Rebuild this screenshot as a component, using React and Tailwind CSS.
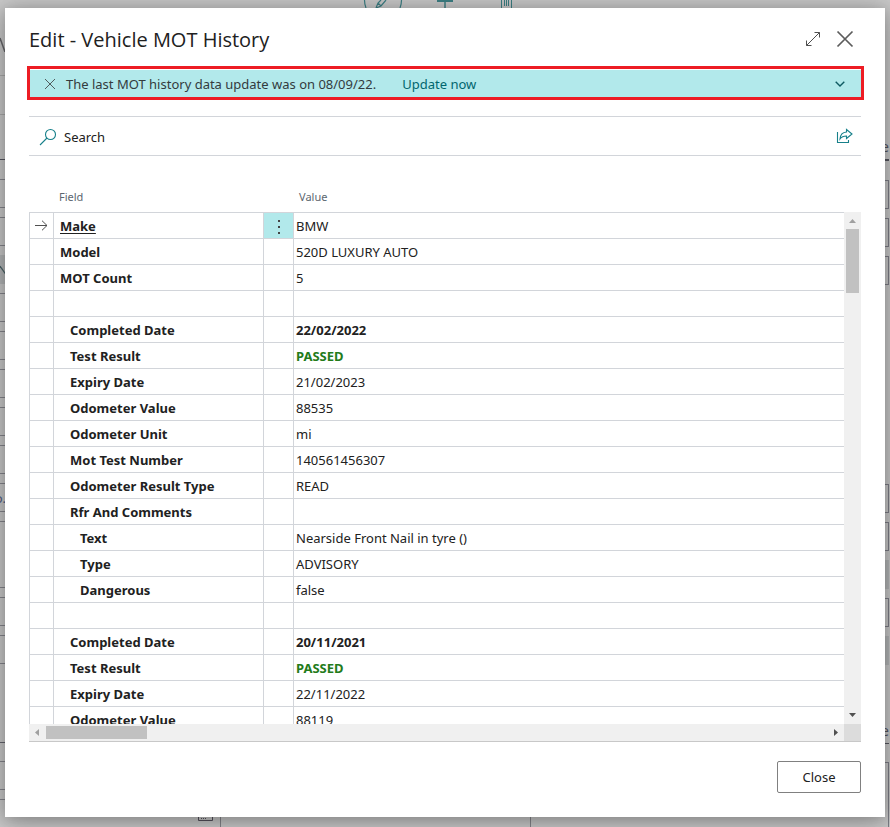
const ROWS = [
  { field: 'Make', value: 'BMW', level: 0, selected: true },
  { field: 'Model', value: '520D LUXURY AUTO', level: 0 },
  { field: 'MOT Count', value: '5', level: 0 },
  { field: '', value: '', level: 0 },
  { field: 'Completed Date', value: '22/02/2022', level: 1, tone: 'strong' },
  { field: 'Test Result', value: 'PASSED', level: 1, tone: 'good' },
  { field: 'Expiry Date', value: '21/02/2023', level: 1 },
  { field: 'Odometer Value', value: '88535', level: 1 },
  { field: 'Odometer Unit', value: 'mi', level: 1 },
  { field: 'Mot Test Number', value: '140561456307', level: 1 },
  { field: 'Odometer Result Type', value: 'READ', level: 1 },
  { field: 'Rfr And Comments', value: '', level: 1 },
  { field: 'Text', value: 'Nearside Front Nail in tyre ()', level: 2 },
  { field: 'Type', value: 'ADVISORY', level: 2 },
  { field: 'Dangerous', value: 'false', level: 2 },
  { field: '', value: '', level: 0 },
  { field: 'Completed Date', value: '20/11/2021', level: 1, tone: 'strong' },
  { field: 'Test Result', value: 'PASSED', level: 1, tone: 'good' },
  { field: 'Expiry Date', value: '22/11/2022', level: 1 },
  { field: 'Odometer Value', value: '88119', level: 1 },
];

const INDENT = ['pl-1.5', 'pl-4', 'pl-[26px]'];
const TONE = { strong: 'font-bold', good: 'font-bold text-[#237b1a]' };

const Box = ({ className = 'h-[29px]' }) => (
  <div className={`shrink-0 border-y border-[#85858c] ${className}`} />
);
const EndBox = ({ className = 'h-[29px]' }) => (
  <div className={`shrink-0 border-y border-r border-[#7d7d86] ${className}`} />
);
const Shade = () => <div className="h-[29px] shrink-0 bg-[#b4b6b7]" />;

/* The record card that stays dimmed behind the dialog. */
function PageBehind() {
  return (
    <div aria-hidden="true" className="absolute inset-0 flex justify-between overflow-hidden bg-[#c8c8c8]">
      <div className="flex w-2 flex-col gap-[9px]">
        <div className="-mb-[9px] h-[76px] shrink-0 border-b border-[#a9a9a9]">
          <svg className="mt-9 h-4 w-3" viewBox="0 0 12 16" fill="none" stroke="#66666a" strokeWidth="1.5">
            <path d="M0 2l5 14" />
          </svg>
        </div>
        <div className="-mb-[9px] h-[39px] shrink-0 border-b border-[#a9a9a9]" />
        <div className="mb-[10px] h-[45px] shrink-0 border-b border-[#55555f]" />
        <Box />
        <Box />
        <div className="h-[29px] shrink-0 bg-[#b4b6b7]">
          <svg className="mt-2 h-4 w-3" viewBox="0 0 12 16" fill="none" stroke="#4c6468" strokeWidth="1.3">
            <path d="M0 3l7 10" />
          </svg>
        </div>
        <Box />
        <Box />
        <Box />
        <Box />
        <Box />
        <div className="flex h-[29px] shrink-0 items-center justify-end border-y border-[#85858c] pr-0.5 text-[#4f5a80]">
          o.
        </div>
        <Box className="h-[67px]" />
        <Box />
        <Box />
        <div className="mb-[9px] h-[70px] shrink-0 border-b border-[#66666f]" />
        <Box />
        <Box />
      </div>
      <div className="flex flex-1 flex-col justify-between">
        <div className="flex h-2 gap-8 overflow-hidden pl-[355px] text-[#3c7f84]">
          <svg width="40" height="8" viewBox="0 0 40 8" fill="none" stroke="currentColor" strokeWidth="1.2">
            <path d="M1.500 0Q1.500 4 3 8M38.500 0Q38.500 4 37 8" />
            <path d="M13 8l2-5 3-3M13 8l5-2 5-6M15 3l3 3" />
          </svg>
          <svg width="24" height="8" viewBox="0 0 24 8" fill="none" stroke="currentColor">
            <path d="M2 1h16" strokeWidth="2" />
            <path d="M10 0v8" strokeWidth="1.500" />
          </svg>
          <svg width="24" height="8" viewBox="0 0 24 8" fill="none" stroke="currentColor">
            <path d="M10.500 0v8M13.500 0v6M15.500 0v6M17.500 0v6M20.500 0v8" />
          </svg>
        </div>
        <div className="flex h-2.5">
          <div className="flex w-[213px] justify-end border-r border-[#85858a] pr-[7px]">
            <svg width="15" height="5" viewBox="0 0 15 5" fill="none" stroke="#55505c">
              <path d="M0.500 0v3.500h14V0" />
              <path d="M3 1.500h6" strokeDasharray="1 1" />
            </svg>
          </div>
          <div className="w-[310px] border-r border-[#85858a]" />
        </div>
      </div>
      <div className="mr-px flex w-2 flex-col gap-[9px]">
        <div className="mb-[10px] flex h-[161px] shrink-0 items-end justify-end border-b-2 border-[#55555f] pb-0.5 text-sm leading-5 text-[#55555f]">
          e
        </div>
        <EndBox />
        <EndBox />
        <EndBox />
        <div className="h-[181px] shrink-0" />
        <EndBox />
        <EndBox />
        <Shade />
        <EndBox />
        <Shade />
        <div className="mb-[9px] flex h-[70px] shrink-0 items-end justify-end border-b border-[#55555f] pb-0.5 text-sm leading-5 text-[#55555f]">
          e
        </div>
        <EndBox className="h-24" />
      </div>
    </div>
  );
}

function Header() {
  return (
    <header className="flex h-[58px] shrink-0 items-center pt-1">
      <h1 className="flex-1 pt-0.5 font-['Open_Sans','Noto_Sans',sans-serif] text-[20px] leading-7 font-medium text-[#212121]">
        Edit - Vehicle MOT History
      </h1>
      <button type="button" aria-label="Expand" className="mr-2 flex size-6 items-center justify-center">
        <svg width="16" height="16" viewBox="0 0 16 16" fill="none" stroke="#505050">
          <path d="M1.500 14.500l13-13M9.500 1.500h5v5M1.500 9.500v5h5" />
        </svg>
      </button>
      <button type="button" aria-label="Close dialog" className="mr-1 flex size-6 items-center justify-center">
        <svg width="18" height="18" viewBox="0 0 18 18" fill="none" stroke="#5c5c5c" strokeWidth="1.700">
          <path d="M1.500 1.500l15 15M16.500 1.500l-15 15" />
        </svg>
      </button>
    </header>
  );
}

function Notification() {
  return (
    <div className="-mr-[3px] -ml-0.5 h-[34px] shrink-0 border-[3px] border-[#ed1c24] pt-px">
      <div role="status" className="flex h-full items-center bg-[#b2e9eb] text-[#333b3e]">
        <button type="button" aria-label="Dismiss" className="mr-2 ml-3 flex size-4 items-center justify-center">
          <svg width="12" height="12" viewBox="0 0 12 12" fill="none" stroke="#505c5e">
            <path d="M1 1l10 10M11 1L1 11" />
          </svg>
        </button>
        <span>The last MOT history data update was on 08/09/22.</span>
        <a href="#update" className="ml-[26px] text-[#00666e]">Update now</a>
        <button type="button" aria-label="Show more" className="mr-3.5 ml-auto flex size-3.5 items-center justify-center">
          <svg width="10" height="6" viewBox="0 0 10 6" fill="none" stroke="#0e5a62" strokeWidth="1.400">
            <path d="M0.700 0.700L5 5L9.300 0.700" />
          </svg>
        </button>
      </div>
    </div>
  );
}

function Toolbar() {
  return (
    <div className="mt-4 flex h-10 shrink-0 items-center justify-between border-y border-[#d2d5da] pr-2 pl-2.5">
      <button type="button" className="flex items-center gap-[7px] pt-0.5">
        <svg width="18" height="18" viewBox="0 0 18 18" fill="none" stroke="#17808a" strokeWidth="1.100">
          <circle cx="11.500" cy="6.500" r="5" />
          <path d="M8 10L1 17" />
        </svg>
        Search
      </button>
      <button type="button" aria-label="Share">
        <svg width="17" height="16" viewBox="0 0 17 16" fill="none" stroke="#17808a" strokeWidth="1.100">
          <path d="M1.500 4v10.500h11V12" />
          <path d="M10.500 1.500L16 6l-5.500 4.500V8C7.500 8 5.500 8.800 4 11c.3-4 2.500-6.700 6.500-7z" />
        </svg>
      </button>
    </div>
  );
}

function History() {
  const line = 'border-[#d2d5da] border-b p-0';
  return (
    <div className="flex min-h-0 flex-1 flex-col border-b border-[#c8c8c8]">
      <div className="flex min-h-0 flex-1">
        <div className="min-w-0 flex-1 overflow-hidden">
          <table className="w-full table-fixed border-separate border-spacing-0">
            <colgroup>
              <col className="w-[25px]" />
              <col className="w-[210px]" />
              <col className="w-[30px]" />
              <col />
            </colgroup>
            <thead>
              <tr className="h-[57px] text-left align-bottom text-[11px] leading-[18px] text-[#5c6670]">
                <td className={line} />
                <th scope="col" className={`${line} pb-1.5 pl-[5px] font-normal`}>Field</th>
                <td className={line} />
                <th scope="col" className={`${line} pb-1.5 pl-[5px] font-normal`}>Value</th>
              </tr>
            </thead>
            <tbody>
              {ROWS.map((row, i) => (
                <tr key={i} className="h-[26px]">
                  <td className={`${line} border-x`}>
                    {row.selected && (
                      <svg className="mx-auto" width="13" height="11" viewBox="0 0 13 11" fill="none" stroke="#505050">
                        <path d="M0 5.500h12M7 .7l5 4.800l-5 4.800" />
                      </svg>
                    )}
                  </td>
                  <th scope="row" className={`${line} border-r text-left font-bold whitespace-nowrap ${INDENT[row.level]}`}>
                    {row.selected ? <a href="#make" className="underline underline-offset-2">{row.field}</a> : row.field}
                  </th>
                  <td className={`${line} border-r ${row.selected ? 'bg-[#b2e9eb]' : ''}`}>
                    {row.selected && (
                      <button type="button" aria-label="More options" className="flex h-[25px] w-full items-center justify-center pt-0.5">
                        <svg width="2" height="14" viewBox="0 0 2 14" fill="#444">
                          <path d="M0 0h2v2H0zM0 6h2v2H0zM0 12h2v2H0z" />
                        </svg>
                      </button>
                    )}
                  </td>
                  <td className={`${line} pl-0.5 whitespace-nowrap ${TONE[row.tone] ?? ''}`}>{row.value}</td>
                </tr>
              ))}
            </tbody>
          </table>
        </div>
        <div className="mt-14 flex w-[17px] shrink-0 flex-col items-center bg-[#f0f0f0]">
          <svg className="h-[17px] w-[17px]" viewBox="0 0 17 17" fill="#a0a0a0"><path d="M5 11h7L8.500 7z" /></svg>
          <div className="h-16 w-[13px] bg-[#c1c1c1]" />
          <svg className="mt-auto h-[17px] w-[17px]" viewBox="0 0 17 17" fill="#505050"><path d="M5 6h7L8.500 10z" /></svg>
        </div>
      </div>
      <div className="flex h-[17px] shrink-0 items-center bg-[#f0f0f0]">
        <svg className="h-[17px] w-[17px]" viewBox="0 0 17 17" fill="#a0a0a0"><path d="M10 5v7L6 8.500z" /></svg>
        <div className="h-[13px] w-[101px] bg-[#c1c1c1]" />
        <svg className="ml-auto h-[17px] w-[17px]" viewBox="0 0 17 17" fill="#505050"><path d="M7 5v7l4-3.500z" /></svg>
        <div className="h-full w-[17px] bg-[#dcdcdc]" />
      </div>
    </div>
  );
}

export default function App() {
  return (
    <div className="relative h-screen overflow-hidden px-[5px] pt-2 pb-2.5 font-['Noto_Sans','Open_Sans',sans-serif] text-[13px] leading-5 text-[#212121]">
      <PageBehind />
      <div
        role="dialog"
        aria-modal="true"
        className="relative flex h-full flex-col bg-white px-6 pb-6 shadow-[0_4px_26px_rgba(0,0,0,0.3),0_2px_12px_rgba(0,0,0,0.14)]"
      >
        <Header />
        <Notification />
        <Toolbar />
        <History />
        <button type="button" className="mt-[19px] h-8 w-[84px] shrink-0 self-end rounded-xs border border-[#808080]">
          Close
        </button>
      </div>
    </div>
  );
}
